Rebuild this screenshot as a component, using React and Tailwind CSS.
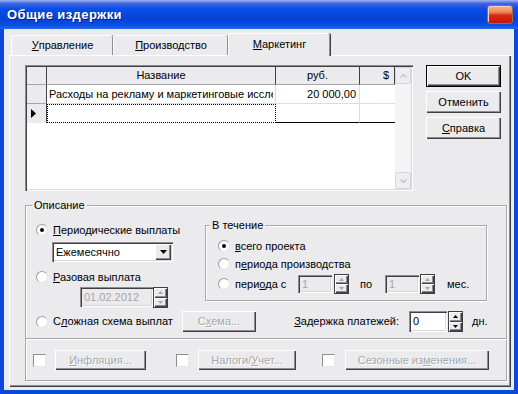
import React from "react";

const PANEL = "bg-[#ebeaed]";
const RAISED = "shadow-[inset_1px_1px_0_#fff,inset_-1px_-1px_0_#404040,inset_-2px_-2px_0_#8e8d93]";
const SUNKEN = "shadow-[inset_1px_1px_0_#8e8d93,inset_2px_2px_0_#404040,inset_-1px_-1px_0_#fff,inset_-2px_-2px_0_#d8d7dc]";
const ETCHED = "border border-[#a7a6aa] shadow-[inset_1px_1px_0_#fff,1px_1px_0_#fff]";
const DIS = "text-[#a7a6aa] [text-shadow:1px_1px_0_#fff]";

function U({ children }) {
  return <span className="underline underline-offset-[1px]">{children}</span>;
}

function Radio({ on }) {
  return (
    <span className="w-[12px] h-[12px] shrink-0 rounded-full bg-white border border-[#9c9ba1] border-r-[#e4e3e8] border-b-[#e4e3e8] flex items-center justify-center">
      {on && <span className="w-[4px] h-[4px] rounded-full bg-black" />}
    </span>
  );
}

function Check({ className = "" }) {
  return <div className={`${className} w-[13px] h-[13px] shrink-0 bg-white border border-[#8e8d93] border-r-[#e6e5ea] border-b-[#e6e5ea]`} />;
}

function Btn({ className, disabled, def, children }) {
  return (
    <div className={`${className} flex ${PANEL} ${def ? "border border-black" : ""}`}>
      <div className={`w-full h-full flex items-center justify-center ${RAISED} ${disabled ? DIS : "text-black"}`}>
        {children}
      </div>
    </div>
  );
}

function Spin({ disabled, className }) {
  const c = disabled ? "#a7a6aa" : "#000";
  return (
    <div className={`${className} flex flex-col border border-[#404040] ${PANEL}`}>
      <div className={`flex-1 flex items-center justify-center ${RAISED}`}>
        <svg width="5" height="3" viewBox="0 0 5 3"><path d="M2.5 0L5 3H0z" fill={c} /></svg>
      </div>
      <div className={`flex-1 flex items-center justify-center ${RAISED}`}>
        <svg width="5" height="3" viewBox="0 0 5 3"><path d="M0 0h5L2.5 3z" fill={c} /></svg>
      </div>
    </div>
  );
}

function Field({ className, disabled, children }) {
  return (
    <div className={`${className} ${SUNKEN} ${disabled ? PANEL + " text-[#a7a6aa]" : "bg-white text-black"} flex items-center pl-[4px]`}>
      {children}
    </div>
  );
}

function Tab({ className, active, children }) {
  return (
    <div
      className={`${className} ${PANEL} flex items-center justify-center rounded-t-[2px] border-l border-t border-white shadow-[inset_-1px_0_0_#8e8d93,1px_0_0_#404040] ${
        active ? "h-[23px] -mb-[1px] relative z-10 pb-[2px]" : "h-[20px]"
      }`}
    >
      {children}
    </div>
  );
}

function Grid() {
  const head = `${PANEL} border-r border-r-[#404040] border-b border-b-[#a7a6aa] flex items-center`;
  return (
    <div className={`w-[388px] h-[126px] bg-white flex p-[2px] ${SUNKEN}`}>
      <div className="flex-1 flex flex-col">
        <div className="h-[18px] flex">
          <div className={`${head} w-[20px]`} />
          <div className={`${head} w-[229px] justify-center`}>Название</div>
          <div className={`${head} w-[84px] justify-center`}>руб.</div>
          <div className={`${head} w-[35px] justify-end pr-[5px]`}>$</div>
        </div>
        <div className="h-[19px] flex">
          <div className={`${PANEL} w-[20px] border-r border-r-[#404040] border-b border-b-[#a7a6aa]`} />
          <div className="w-[229px] border-r border-b border-[#dcdbe0] pl-[2px] flex items-center overflow-hidden whitespace-nowrap">
            <span className="w-[224px] overflow-hidden">Расходы на рекламу и маркетинговые иссле</span>
          </div>
          <div className="w-[84px] border-r border-b border-[#dcdbe0] flex items-center justify-end pr-[3px]">20 000,00</div>
          <div className="w-[35px] border-b border-[#dcdbe0]" />
        </div>
        <div className="h-[19px] flex">
          <div className={`${PANEL} w-[20px] border-r border-r-[#404040] flex items-center pl-[4px]`}>
            <svg width="5" height="9" viewBox="0 0 5 9"><path d="M0 0L5 4.5L0 9z" fill="#000" /></svg>
          </div>
          <div className="w-[229px] border border-dotted border-black" />
          <div className="w-[84px] border-r border-r-[#dcdbe0] border-b border-b-black" />
          <div className="w-[35px] border-b border-black" />
        </div>
      </div>
      <div className="w-[16px] flex flex-col bg-[#f4f3f6]">
        <div className="h-[17px] rounded-[2px] bg-[#eeedf2] border border-[#d6d5db] flex items-center justify-center">
          <svg width="7" height="4" viewBox="0 0 7 4"><path d="M0.5 3.5L3.5 0.5L6.5 3.5" fill="none" stroke="#c3c2c9" strokeWidth="1.4" /></svg>
        </div>
        <div className="flex-1" />
        <div className="h-[17px] rounded-[2px] bg-[#eeedf2] border border-[#d6d5db] flex items-center justify-center">
          <svg width="7" height="4" viewBox="0 0 7 4"><path d="M0.5 0.5L3.5 3.5L6.5 0.5" fill="none" stroke="#c3c2c9" strokeWidth="1.4" /></svg>
        </div>
      </div>
    </div>
  );
}

export default function App() {
  return (
    <div className="w-[518px] h-[394px] flex flex-col bg-[#0c48d9] font-['Liberation_Sans',Arial,sans-serif] text-[11px] text-black leading-none overflow-hidden">
      <div className="h-[29px] shrink-0 flex items-center pl-[7px] pr-[5px] bg-[linear-gradient(to_bottom,#a3b3f3_0%,#3f66e3_12%,#0b4ee6_30%,#0343d4_65%,#0a4fe4_88%,#2a66f0_100%)]">
        <span className="text-white font-bold text-[13px] tracking-[0.4px] [text-shadow:1px_1px_0_#0a1e7a]">Общие издержки</span>
        <div className="ml-auto w-[26px] h-[19px] rounded-[3px] border border-[#9a6a5c] bg-[linear-gradient(to_bottom,#f6b48e_0%,#ec8a5a_35%,#dc2a14_55%,#c8140c_100%)] shadow-[inset_1px_1px_0_#f8d0b8]" />
      </div>
      <div className={`flex-1 mx-[4px] mb-[4px] ${PANEL} flex flex-col pl-[5px] pr-[3px] pt-[4px]`}>
        <div className="h-[22px] flex items-end pl-[2px]">
          <Tab className="w-[102px]"><U>У</U>правление</Tab>
          <Tab className="w-[115px]"><U>П</U>роизводство</Tab>
          <Tab className="w-[102px]" active><U>М</U>аркетинг</Tab>
        </div>
        <div className={`h-[332px] flex flex-col pt-[10px] pl-[16px] pr-[4px] ${PANEL} shadow-[inset_1px_1px_0_#fff,inset_-1px_-1px_0_#404040,inset_-2px_-2px_0_#8e8d93]`}>
          <div className="flex gap-[13px]">
            <Grid />
            <div className="w-[75px] flex flex-col gap-[4px]">
              <Btn className="h-[22px]" def>OK</Btn>
              <Btn className="h-[22px]">Отменить</Btn>
              <Btn className="h-[22px]"><U>С</U>правка</Btn>
            </div>
          </div>

          <div className={`relative mt-[14px] ${ETCHED} pt-[16px] pl-[10px] pr-[14px] pb-[6px]`}>
            <span className={`absolute -top-[6px] left-[6px] px-[2px] ${PANEL}`}>Описание</span>
            <div className="flex items-start">
              <div className="w-[169px] flex flex-col">
                <div className="h-[16px] flex items-center">
                  <Radio on />
                  <span className="ml-[5px]"><U>П</U>ериодические выплаты</span>
                </div>
                <div className={`mt-[4px] ml-[16px] w-[121px] h-[20px] bg-white ${SUNKEN} flex items-center pl-[4px] pr-[2px]`}>
                  <span className="flex-1">Ежемесячно</span>
                  <div className={`w-[16px] h-[16px] ${PANEL} ${RAISED} flex items-center justify-center`}>
                    <svg width="7" height="4" viewBox="0 0 7 4"><path d="M0 0h7L3.5 4z" fill="#000" /></svg>
                  </div>
                </div>
                <div className="mt-[7px] h-[16px] flex items-center">
                  <Radio />
                  <span className="ml-[5px]"><U>Р</U>азовая выплата</span>
                </div>
                <div className="mt-[2px] ml-[44px] flex">
                  <Field className="w-[73px] h-[20px]" disabled>01.02.2012</Field>
                  <Spin className="w-[15px] h-[21px]" disabled />
                </div>
              </div>

              <div className={`relative mt-[3px] w-[282px] h-[76px] ${ETCHED} pt-[12px] pl-[12px]`}>
                <span className={`absolute -top-[6px] left-[4px] px-[2px] ${PANEL}`}>В течение</span>
                <div className="h-[16px] flex items-center">
                  <Radio on />
                  <span className="ml-[5px]"><U>в</U>сего проекта</span>
                </div>
                <div className="mt-[2px] h-[16px] flex items-center">
                  <Radio />
                  <span className="ml-[5px]">п<U>е</U>риода производства</span>
                </div>
                <div className="mt-[2px] h-[20px] flex items-center">
                  <Radio />
                  <span className="ml-[5px] w-[63px]">пери<U>о</U>да с</span>
                  <Field className="w-[34px] h-[18px]" disabled>1</Field>
                  <Spin className="ml-[2px] w-[15px] h-[20px]" disabled />
                  <span className="ml-[11px] w-[25px]">по</span>
                  <Field className="w-[34px] h-[18px]" disabled>1</Field>
                  <Spin className="ml-[1px] w-[15px] h-[20px]" disabled />
                  <span className="ml-[12px]">мес.</span>
                </div>
              </div>
            </div>

            <div className="mt-[3px] h-[21px] flex items-center">
              <Radio />
              <span className="ml-[5px] w-[129px]">С<U>л</U>ожная схема выплат</span>
              <Btn className="w-[74px] h-[21px]" disabled>С<U>х</U>ема...</Btn>
              <span className="ml-auto"><U>З</U>адержка платежей:</span>
              <Field className="ml-[10px] w-[38px] h-[21px]">0</Field>
              <Spin className="ml-[1px] w-[15px] h-[21px]" />
              <span className="ml-[9px] w-[20px]">дн.</span>
            </div>
          </div>

          <div className="flex items-center border border-t-0 border-[#a7a6aa] shadow-[inset_1px_0_0_#fff,1px_1px_0_#fff] pt-[11px] pb-[10px] pl-[7px]">
            <Check />
            <Btn className="ml-[9px] w-[91px] h-[20px]" disabled><U>И</U>нфляция...</Btn>
            <Check className="ml-[30px]" />
            <Btn className="ml-[9px] w-[98px] h-[20px]" disabled>Налоги/<U>У</U>чет...</Btn>
            <Check className="ml-[26px]" />
            <Btn className="ml-[10px] w-[144px] h-[20px]" disabled>Сезонные из<U>м</U>енения...</Btn>
          </div>
        </div>
      </div>
    </div>
  );
}
